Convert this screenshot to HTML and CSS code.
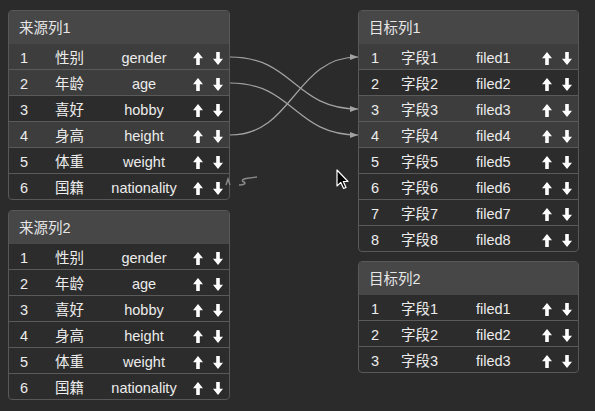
FILE: index.html
```html
<!DOCTYPE html>
<html lang="zh-CN">
<head>
    <meta charset="UTF-8">
    <title>字段映射</title>
    <link rel="stylesheet" href="styles.css">
</head>
<body>
<svg class="defs" aria-hidden="true">
    <symbol id="up" viewBox="0 0 10 13">
        <polygon points="5,0 10,6.2 6.8,6.2 6.8,13 3.2,13 3.2,6.2 0,6.2"/>
    </symbol>
    <symbol id="down" viewBox="0 0 10 13">
        <polygon points="3.2,0 6.8,0 6.8,6.8 10,6.8 5,13 0,6.8 3.2,6.8"/>
    </symbol>
</svg>

<div class="board">
    <div class="column source">
        <div class="panel">
            <div class="title">来源列1</div>
            <div class="row on"><span>1</span><span>性别</span><span class="key">gender</span><span class="ops"><svg><use href="#up"/></svg><svg><use href="#down"/></svg></span></div>
            <div class="row on"><span>2</span><span>年龄</span><span class="key">age</span><span class="ops"><svg><use href="#up"/></svg><svg><use href="#down"/></svg></span></div>
            <div class="row"><span>3</span><span>喜好</span><span class="key">hobby</span><span class="ops"><svg><use href="#up"/></svg><svg><use href="#down"/></svg></span></div>
            <div class="row on"><span>4</span><span>身高</span><span class="key">height</span><span class="ops"><svg><use href="#up"/></svg><svg><use href="#down"/></svg></span></div>
            <div class="row"><span>5</span><span>体重</span><span class="key">weight</span><span class="ops"><svg><use href="#up"/></svg><svg><use href="#down"/></svg></span></div>
            <div class="row"><span>6</span><span>国籍</span><span class="key">nationality</span><span class="ops"><svg><use href="#up"/></svg><svg><use href="#down"/></svg></span></div>
        </div>
        <div class="panel">
            <div class="title">来源列2</div>
            <div class="row"><span>1</span><span>性别</span><span class="key">gender</span><span class="ops"><svg><use href="#up"/></svg><svg><use href="#down"/></svg></span></div>
            <div class="row"><span>2</span><span>年龄</span><span class="key">age</span><span class="ops"><svg><use href="#up"/></svg><svg><use href="#down"/></svg></span></div>
            <div class="row"><span>3</span><span>喜好</span><span class="key">hobby</span><span class="ops"><svg><use href="#up"/></svg><svg><use href="#down"/></svg></span></div>
            <div class="row"><span>4</span><span>身高</span><span class="key">height</span><span class="ops"><svg><use href="#up"/></svg><svg><use href="#down"/></svg></span></div>
            <div class="row"><span>5</span><span>体重</span><span class="key">weight</span><span class="ops"><svg><use href="#up"/></svg><svg><use href="#down"/></svg></span></div>
            <div class="row"><span>6</span><span>国籍</span><span class="key">nationality</span><span class="ops"><svg><use href="#up"/></svg><svg><use href="#down"/></svg></span></div>
        </div>
    </div>

    <div class="column target">
        <div class="panel">
            <div class="title">目标列1</div>
            <div class="row on"><span>1</span><span>字段1</span><span class="key">filed1</span><span class="ops"><svg><use href="#up"/></svg><svg><use href="#down"/></svg></span></div>
            <div class="row"><span>2</span><span>字段2</span><span class="key">filed2</span><span class="ops"><svg><use href="#up"/></svg><svg><use href="#down"/></svg></span></div>
            <div class="row on"><span>3</span><span>字段3</span><span class="key">filed3</span><span class="ops"><svg><use href="#up"/></svg><svg><use href="#down"/></svg></span></div>
            <div class="row on"><span>4</span><span>字段4</span><span class="key">filed4</span><span class="ops"><svg><use href="#up"/></svg><svg><use href="#down"/></svg></span></div>
            <div class="row"><span>5</span><span>字段5</span><span class="key">filed5</span><span class="ops"><svg><use href="#up"/></svg><svg><use href="#down"/></svg></span></div>
            <div class="row"><span>6</span><span>字段6</span><span class="key">filed6</span><span class="ops"><svg><use href="#up"/></svg><svg><use href="#down"/></svg></span></div>
            <div class="row"><span>7</span><span>字段7</span><span class="key">filed7</span><span class="ops"><svg><use href="#up"/></svg><svg><use href="#down"/></svg></span></div>
            <div class="row"><span>8</span><span>字段8</span><span class="key">filed8</span><span class="ops"><svg><use href="#up"/></svg><svg><use href="#down"/></svg></span></div>
        </div>
        <div class="panel">
            <div class="title">目标列2</div>
            <div class="row"><span>1</span><span>字段1</span><span class="key">filed1</span><span class="ops"><svg><use href="#up"/></svg><svg><use href="#down"/></svg></span></div>
            <div class="row"><span>2</span><span>字段2</span><span class="key">filed2</span><span class="ops"><svg><use href="#up"/></svg><svg><use href="#down"/></svg></span></div>
            <div class="row"><span>3</span><span>字段3</span><span class="key">filed3</span><span class="ops"><svg><use href="#up"/></svg><svg><use href="#down"/></svg></span></div>
        </div>
    </div>

    <!-- 连线层：来源行右端 -> 目标行左端 -->
    <svg class="links" width="595" height="411">
        <defs>
            <marker id="tip" viewBox="0 0 8 6" refX="8" refY="3" markerWidth="8" markerHeight="6" orient="auto" markerUnits="userSpaceOnUse">
                <polygon points="0,0 8,3 0,6" fill="#a3a3a3"/>
            </marker>
        </defs>
        <path d="M230 57 C 294 57, 294 109, 358 109" marker-end="url(#tip)"/>
        <path d="M230 83 C 294 83, 294 135, 358 135" marker-end="url(#tip)"/>
        <path d="M230 135 C 294 135, 294 57, 358 57" marker-end="url(#tip)"/>
        <!-- 拖拽中的临时线 -->
        <path class="drag" d="M257 177 L246 178.5 C 241 179.5, 242 181.5, 244 182 C 246 183, 245 185, 239 185"/>
        <path class="drag" d="M226 185 L228 179 L230 185"/>
    </svg>

    <svg class="cursor" width="13" height="21" viewBox="0 0 13 21">
        <polygon points="1,1 1,17 4.8,13.4 7.6,19.5 10,18.4 7.3,12.5 12,12.5" fill="#000" stroke="#fff" stroke-width="1.2" stroke-linejoin="round"/>
    </svg>
</div>
</body>
</html>
```

FILE: styles.css
```css
*{
    margin:0;
    padding:0;
    box-sizing:border-box;
}
body{
    background-color:#2b2b2b;
    color:#ececec;
    font-family:"Liberation Sans","Noto Sans CJK SC",sans-serif;
    font-size:14.5px;
}
.defs{
    position:absolute;
    width:0;
    height:0;
    overflow:hidden;
}
.board{
    position:relative;
    display:flex;
    gap:128px;
    width:595px;
    height:411px;
    padding:10px 0 0 8px;
}
.column{
    display:flex;
    flex-direction:column;
}
.source{
    width:222px;
    gap:10px;
}
.target{
    width:221px;
    gap:9px;
}
.panel{
    border:1px solid #585858;
    border-radius:4px;
    background-color:#2c2c2c;
    overflow:hidden;
}
.panel .title{
    height:33px;
    line-height:34px;
    padding-left:10px;
    background-color:#474747;
    color:#e6e6e6;
}
.panel .row{
    display:grid;
    align-items:start;
    height:26px;
    padding-top:2px;
    line-height:25px;
    border-bottom:1px solid #5a5a5a;
}
.panel .row:last-child{
    border-bottom:0;
    height:25px;
}
.panel .row.on{
    background-color:#3d3d3d;
}
.source .row{
    grid-template-columns:35px 48px 82px 1fr;
    padding-left:11px;
    padding-right:6px;
}
.source .key{
    text-align:center;
}
.target .row{
    grid-template-columns:30px 75px 1fr auto;
    padding-left:12px;
    padding-right:6px;
}
.ops{
    display:flex;
    align-items:center;
    justify-content:flex-end;
    gap:10px;
    height:25px;
}
.ops svg{
    width:10px;
    height:13px;
    fill:#fff;
}
.links{
    position:absolute;
    left:0;
    top:0;
    pointer-events:none;
}
.links path{
    fill:none;
    stroke:#a3a3a3;
    stroke-width:1.2;
}
.links .drag{
    stroke:#8a8a8a;
    stroke-width:1.4;
}
.cursor{
    position:absolute;
    left:336px;
    top:169px;
}
```
